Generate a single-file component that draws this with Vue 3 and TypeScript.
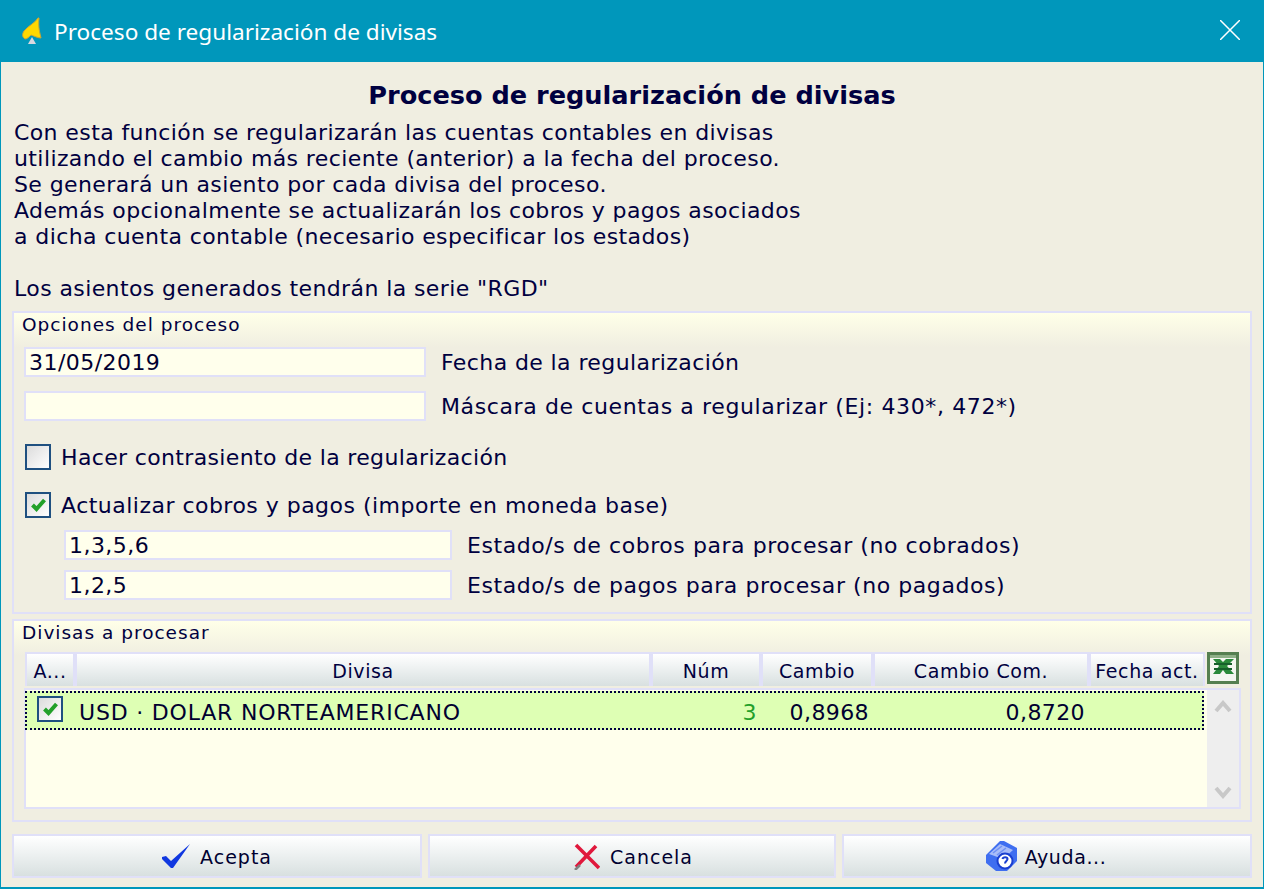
<template>
  <div class="window">
    <header class="titlebar">
      <svg class="app-icon" width="24" height="30" viewBox="0 0 24 30">
        <path d="M18 2 C15 7 8 10 4 15 C2 18 2 21 5 23 C7 23 9 21 11 19 C14 20 18 22 21 22 C20 17 18 12 19 2 Z" fill="#ffd800" stroke="#c8a436" stroke-width="1" />
        <path d="M8 28 L12 21 L16 28 Z" fill="#d8d8e0" />
      </svg>
      <span class="title-text">Proceso de regularización de divisas</span>
      <svg class="close" width="20" height="20" viewBox="0 0 20 20">
        <path d="M0 0 L20 20 M20 0 L0 20" stroke="#fff" stroke-width="1.5" fill="none" />
      </svg>
    </header>

    <main class="content">
      <h1 class="heading">Proceso de regularización de divisas</h1>
      <p class="intro">
        <span v-for="line in introLines" :key="line" class="intro-line">{{ line }}</span>
      </p>

      <section class="panel options">
        <div class="legend">Opciones del proceso</div>
        <div class="field first">
          <input class="input wide" value="31/05/2019" readonly />
          <label>Fecha de la regularización</label>
        </div>
        <div class="field second">
          <input class="input wide" value="" readonly />
          <label class="mask-label">Máscara de cuentas a regularizar (Ej: 430*, 472*)</label>
        </div>
        <div class="check-row plain">
          <span class="check"></span>
          <label>Hacer contrasiento de la regularización</label>
        </div>
        <div class="check-row active">
          <span class="check">
            <svg width="15" height="14" viewBox="0 0 15 14"><path d="M1.5 7 L5.5 11 L13.5 2" stroke="#22a02a" stroke-width="4" fill="none" /></svg>
          </span>
          <label>Actualizar cobros y pagos (importe en moneda base)</label>
        </div>
        <div class="field nested">
          <input class="input narrow" value="1,3,5,6" readonly />
          <label class="state-label">Estado/s de cobros para procesar (no cobrados)</label>
        </div>
        <div class="field nested tight">
          <input class="input narrow" value="1,2,5" readonly />
          <label class="state-label">Estado/s de pagos para procesar (no pagados)</label>
        </div>
      </section>

      <section class="panel currencies">
        <div class="legend">Divisas a procesar</div>
        <div class="grid-head">
          <div v-for="col in columns" :key="col.label" class="head-cell" :style="{ width: col.width + 'px' }">{{ col.label }}</div>
          <svg class="excel" width="32" height="32" viewBox="0 0 32 32">
            <rect x="1.5" y="1.5" width="29" height="29" fill="#f4f6f0" stroke="#557f50" stroke-width="3" />
            <rect x="3" y="3" width="26" height="3" fill="#8fb088" />
            <path d="M6 7 H13 L16 10 L19 7 H27 L20 14 L27 22 H19 L16 18 L13 22 H6 L12 14 Z" fill="#2a8a3a" />
            <path d="M7 12 H25 M7 17 H25" stroke="#16602a" stroke-width="2" />
          </svg>
        </div>
        <div class="grid-body">
          <div class="rows">
            <div class="row">
              <span class="check row-check">
                <svg width="15" height="14" viewBox="0 0 15 14"><path d="M1.5 7 L5.5 11 L13.5 2" stroke="#22a02a" stroke-width="4" fill="none" /></svg>
              </span>
              <span class="cell-name">USD · DOLAR NORTEAMERICANO</span>
              <span class="cell-num">3</span>
              <span class="cell-rate">0,8968</span>
              <span class="cell-com">0,8720</span>
            </div>
          </div>
          <div class="scrollbar">
            <svg width="18" height="14" viewBox="0 0 18 14"><path d="M2 11 L9 3 L16 11" stroke="#c8c8c8" stroke-width="4" fill="none" /></svg>
            <svg width="18" height="14" viewBox="0 0 18 14"><path d="M2 3 L9 11 L16 3" stroke="#c8c8c8" stroke-width="4" fill="none" /></svg>
          </div>
        </div>
      </section>

      <footer class="buttons">
        <button class="btn accept">
          <svg width="28" height="24" viewBox="0 0 28 24"><path d="M0 13 L4 12 L9 17 L28 0 L11 24 L9 24 L0 15 Z" fill="#1038e0" /></svg>
          <span>Acepta</span>
        </button>
        <button class="btn cancel">
          <svg width="26" height="27" viewBox="0 0 26 27">
            <path d="M2 24 L22 3 M2 2 L25 25" stroke="#e0183c" stroke-width="3.6" fill="none" />
            <path d="M1 27 L6 22" stroke="#808080" stroke-width="2.5" />
          </svg>
          <span>Cancela</span>
        </button>
        <button class="btn help">
          <svg width="32" height="32" viewBox="0 0 32 32">
            <path d="M1 15 L15 1 L19 1 L32 8 V21 L22 31 H11 L1 23 Z" fill="#3f6ef0" />
            <path d="M4 14 L15 4 L28 10 L18 19 Z" fill="#a8bcf8" />
            <path d="M8 13 L17 6 M12 15 L21 8" stroke="#6f90f4" stroke-width="1.5" />
            <circle cx="20" cy="21" r="7.5" fill="#fff" stroke="#1a3fd0" stroke-width="2" />
            <path d="M17.5 19 C18 16.5 22.5 16.5 22.5 19 C22.5 21 20 21 20 23.5" stroke="#1a3fd0" stroke-width="2" fill="none" />
          </svg>
          <span>Ayuda...</span>
        </button>
      </footer>
    </main>
  </div>
</template>

<script setup lang="ts">
interface Column {
  label: string
  width: number
}

const introLines: string[] = [
  'Con esta función se regularizarán las cuentas contables en divisas',
  'utilizando el cambio más reciente (anterior) a la fecha del proceso.',
  'Se generará un asiento por cada divisa del proceso.',
  'Además opcionalmente se actualizarán los cobros y pagos asociados',
  'a dicha cuenta contable (necesario especificar los estados)',
  '\u00a0',
  'Los asientos generados tendrán la serie "RGD"',
]

const columns: Column[] = [
  { label: 'A...', width: 50 },
  { label: 'Divisa', width: 576 },
  { label: 'Núm', width: 110 },
  { label: 'Cambio', width: 112 },
  { label: 'Cambio Com.', width: 216 },
  { label: 'Fecha act.', width: 116 },
]
</script>

<style>
html,
body {
  margin: 0;
  background: #f0eee1;
}
</style>

<style scoped>
.window {
  width: 1264px;
  height: 889px;
  box-sizing: border-box;
  border: 1px solid #0097bb;
  border-bottom-width: 2px;
  background: #f0eee1;
  color: #000040;
  font-family: "DejaVu Sans", Verdana, sans-serif;
  font-size: 22px;
  letter-spacing: 0.4px;
  overflow: hidden;
}

.titlebar {
  height: 62px;
  margin: -1px -1px 0;
  background: #0097bb;
  color: #fff;
  display: flex;
  align-items: center;
  padding: 0 24px 0 20px;
  letter-spacing: 0;
}

.app-icon {
  flex: none;
  margin-right: 10px;
}

.title-text {
  font-family: "Noto Sans", "Open Sans", sans-serif;
  font-size: 22.6px;
  flex: 1;
}

.close {
  margin-bottom: 2px;
}

.content {
  padding: 0 11px;
}

.heading {
  margin: 0;
  height: 58px;
  line-height: 66px;
  text-align: center;
  font-size: 25.6px;
  font-weight: bold;
  letter-spacing: 0;
  color: #000040;
  box-sizing: border-box;
}

.intro {
  margin: 0;
  padding-left: 2px;
  height: 191px;
  line-height: 26px;
}

.intro-line {
  display: block;
  white-space: pre;
}

.panel {
  box-sizing: border-box;
  border: 2px solid #e0e0f8;
  background: linear-gradient(#ffffe8, #f0eee1 34px);
  padding: 0 10px;
}

.options {
  height: 303px;
}

.currencies {
  height: 203px;
  margin-top: 5px;
  padding-right: 9px;
}

.legend {
  height: 24px;
  margin-left: -2px;
  line-height: 24px;
  font-size: 18.5px;
  letter-spacing: 1px;
}

.field {
  display: flex;
  align-items: center;
  white-space: nowrap;
}

.first {
  margin-top: 10px;
}

.second {
  margin-top: 14px;
}

.nested {
  margin-top: 12px;
  padding-left: 40px;
}

.tight {
  margin-top: 10px;
}

.mask-label {
  letter-spacing: 0.62px;
}

.state-label {
  letter-spacing: 0.56px;
}

.input {
  box-sizing: border-box;
  height: 30px;
  border: 2px solid #e0e0f8;
  background: #ffffec;
  padding: 0 3px;
  margin: 0;
  outline: none;
  color: #000030;
  font: 22px "DejaVu Sans", Verdana, sans-serif;
  letter-spacing: 0.45px;
}

.wide {
  width: 402px;
  margin-right: 15px;
}

.narrow {
  width: 388px;
  margin-right: 15px;
}

.check-row {
  display: flex;
  align-items: center;
  padding-left: 1px;
  white-space: nowrap;
}

.check-row label {
  margin-left: 10px;
}

.plain label {
  letter-spacing: 0.35px;
}

.active label {
  letter-spacing: 0.48px;
}

.plain {
  margin-top: 23px;
}

.active {
  margin-top: 22px;
}

.check {
  box-sizing: border-box;
  flex: none;
  width: 26px;
  height: 26px;
  border: 2px solid #1f5080;
  background: linear-gradient(135deg, #dcdcdc, #ffffff);
  display: flex;
  align-items: center;
  justify-content: center;
}

.grid-head {
  display: flex;
  height: 34px;
  margin-top: 7px;
  margin-left: 1px;
}

.head-cell {
  box-sizing: border-box;
  flex: none;
  height: 34px;
  border: 2px solid #e0e0f8;
  border-bottom: 0;
  background: linear-gradient(#ffffff, #d8e0e0);
  text-align: center;
  line-height: 34px;
  font-size: 19px;
  letter-spacing: 0.6px;
  white-space: nowrap;
  overflow: hidden;
}

.excel {
  flex: none;
  margin-left: 2px;
}

.grid-body {
  box-sizing: border-box;
  height: 121px;
  margin-top: 2px;
  border: 2px solid #e0e0f8;
  background: #ffffec;
  display: flex;
}

.rows {
  flex: 1;
  margin-left: -1px;
  padding: 1px 3px 0 0;
}

.row {
  box-sizing: border-box;
  height: 39px;
  border: 2px dotted #000040;
  background: #deffb4;
  display: flex;
  align-items: center;
  color: #000030;
  white-space: nowrap;
}

.row-check {
  margin-left: 10px;
  margin-bottom: 3px;
}

.cell-name {
  margin-left: 16px;
  width: 604px;
  letter-spacing: 0.8px;
}

.cell-name,
.cell-num,
.cell-rate,
.cell-com {
  margin-top: 4px;
}

.cell-num {
  width: 74px;
  text-align: right;
  color: #22a02a;
}

.cell-rate {
  width: 112px;
  text-align: right;
}

.cell-com {
  width: 216px;
  text-align: right;
}

.scrollbar {
  flex: none;
  width: 32px;
  background: #eeeeee;
  display: flex;
  flex-direction: column;
  justify-content: space-between;
  align-items: center;
  padding: 10px 0 8px;
  box-sizing: border-box;
}

.buttons {
  display: flex;
  justify-content: space-between;
  margin-top: 12px;
}

.btn {
  box-sizing: border-box;
  height: 44px;
  width: 410px;
  flex: none;
  border: 2px solid #e0e0f8;
  background: linear-gradient(#ffffff, #d8e0e0);
  display: flex;
  align-items: center;
  justify-content: center;
  gap: 10px;
  padding: 0;
  color: #000030;
  font: 19px "DejaVu Sans", Verdana, sans-serif;
  letter-spacing: 1px;
}

.btn span {
  margin-top: 2px;
}

.cancel {
  width: 408px;
  padding-left: 3px;
}

.help {
  gap: 8px;
  padding-right: 3px;
  letter-spacing: 0.6px;
}
</style>
